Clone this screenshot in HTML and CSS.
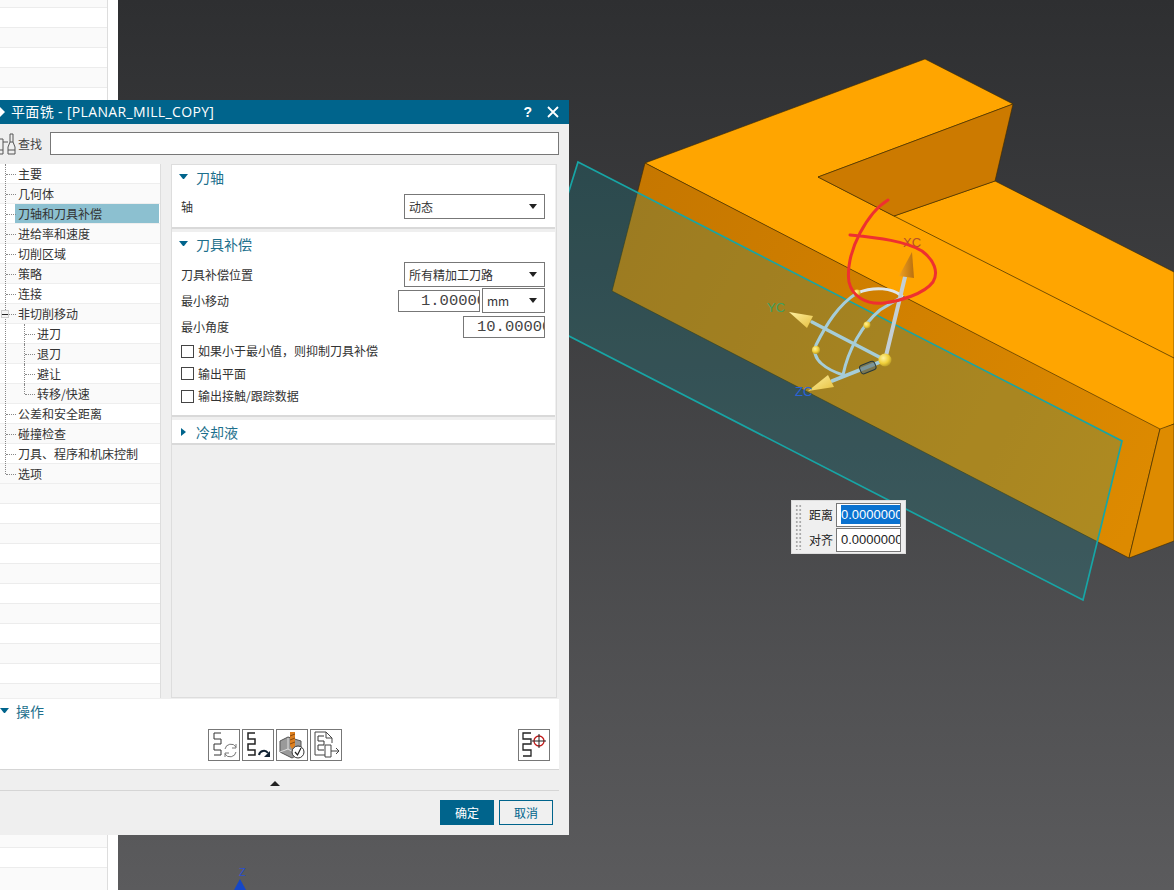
FILE: index.html
```html
<!DOCTYPE html>
<html lang="zh-CN">
<head>
<meta charset="utf-8">
<title>平面铣</title>
<link rel="stylesheet" href="styles.css">
</head>
<body>
<div class="app">
  <aside class="side"><div class="side-rows"></div></aside>
  <main class="viewport">
    <svg class="scene" viewBox="118 0 1056 890" xmlns="http://www.w3.org/2000/svg">
      <defs>
        <linearGradient id="front" gradientUnits="userSpaceOnUse" x1="620" y1="220" x2="1150" y2="490"><stop offset="0" stop-color="#c67700"/><stop offset="1" stop-color="#dd8a00"/></linearGradient>
        <radialGradient id="ball" cx=".38" cy=".35" r=".75"><stop offset="0" stop-color="#fff3a0"/><stop offset=".55" stop-color="#f0cf3a"/><stop offset="1" stop-color="#a88a20"/></radialGradient>
        <linearGradient id="coneY" x1="0" y1="0" x2="1" y2="1"><stop offset="0" stop-color="#fff0a0"/><stop offset="1" stop-color="#e6c040"/></linearGradient>
        <linearGradient id="coneX" x1="0" y1="0" x2="1" y2="0"><stop offset="0" stop-color="#f0a020"/><stop offset="1" stop-color="#b87010"/></linearGradient>
      </defs>
      <polygon points="645,163 925,59 1013,104 818,177 894,216 995,181 1174,272 1174,424 1160,430" fill="#ffa500" stroke="#3a2a00" stroke-width=".6"/>
      <polygon points="818,177 1013,104 995,181 894,216" fill="#cc7a00" stroke="#3a2a00" stroke-width=".6"/>
      <polygon points="645,163 612,291 1129,558 1160,429" fill="url(#front)" stroke="#3a2a00" stroke-width=".6"/>
      <polygon points="1160,429 1129,558 1174,541 1174,424" fill="#de8b00" stroke="#3a2a00" stroke-width=".6"/>
      <line x1="894" y1="216" x2="1174" y2="358" stroke="#3a2a00" stroke-width=".7"/>
      <polygon points="578,162 1122,441 1083,600 530,316" fill="#0a8f95" fill-opacity=".22" stroke="#17a5a5" stroke-width="1.7"/>
      <g fill="none" stroke-linecap="round">
        <path d="M857 293C875 286 892 288 902 296" stroke="#dfe6ea" stroke-width="3"/>
        <path d="M857 293C838 305 826 325 816 345C810 360 828 370 843 375" stroke="#a6cdd8" stroke-width="3"/>
        <path d="M843 375C848 350 862 325 880 310L900 298" stroke="#a6cdd8" stroke-width="3"/>
        <path d="M812 322L885 360" stroke="#a6cdd8" stroke-width="3.5"/>
        <path d="M832 381L885 360" stroke="#a6cdd8" stroke-width="3.5"/>
        <path d="M885 360L905 277" stroke="#c3cfd6" stroke-width="4"/>
      </g>
      <polygon points="912,252 899,276 914,278" fill="url(#coneX)"/>
      <polygon points="789,312 813,316 807,328" fill="url(#coneY)"/>
      <polygon points="808,391 828,375 834,387" fill="url(#coneY)"/>
      <rect x="860" y="363" width="16" height="9" rx="3" transform="rotate(-22 868 368)" fill="#5f7072" fill-opacity=".6" stroke="#27383a"/>
      <circle cx="885" cy="360" r="6.5" fill="url(#ball)"/>
      <circle cx="857" cy="293" r="3.5" fill="url(#ball)"/>
      <circle cx="867" cy="325" r="3.5" fill="url(#ball)"/>
      <circle cx="816" cy="350" r="4" fill="url(#ball)"/>
      <text x="903" y="247" class="axis" fill="#b5502a">XC</text>
      <text x="767" y="312" class="axis" fill="#3fa060">YC</text>
      <text x="795" y="396" class="axis" fill="#2a62d8">ZC</text>
      <path d="M888 200C878 206 868 218 860 233C850 252 847 270 849 282C852 296 866 305 884 303C900 301 924 294 933 282C939 272 934 260 922 251C905 241 880 238 850 235" fill="none" stroke="#ee3030" stroke-width="3" stroke-linecap="round"/>
      <text x="239" y="876" class="axis-z" fill="#2a4fd0">Z</text>
      <polygon points="240,879 234,890 246,890" fill="#1547c8"/>
    </svg>
  </main>
</div>

<section class="float-panel">
  <div class="grip"></div>
  <div class="float-fields">
    <div class="float-row"><span class="float-label">距离</span><div class="float-input"><span class="selected">0.0000000</span></div></div>
    <div class="float-row"><span class="float-label">对齐</span><div class="float-input">0.0000000</div></div>
  </div>
</section>

<section class="dialog">
  <header class="titlebar">
    <svg class="title-icon" width="6" height="12" viewBox="0 0 6 12"><path d="M0 1L5 6L0 11Z" fill="#fff"/></svg>
    <span class="title-text">平面铣 - [PLANAR_MILL_COPY]</span>
    <span class="title-btn help">?</span>
    <svg class="title-close" width="12" height="12" viewBox="0 0 12 12"><path d="M1 1L11 11M11 1L1 11" stroke="#fff" stroke-width="1.8"/></svg>
  </header>

  <div class="search">
    <svg class="binoculars" width="16" height="22" viewBox="0 0 16 22" fill="none" stroke="#555"><path d="M-2 6H3V21H-2M3 17H-2M3 9H8M10 1H13V9H10ZM10 9L8 14V21H15V14L13 9M8 17H15"/></svg>
    <span class="search-label">查找</span>
    <div class="search-input"></div>
  </div>

  <div class="main">
    <nav class="tree">
      <div class="tree-list">
        <div class="row">主要</div>
        <div class="row alt">几何体</div>
        <div class="row active"><span class="row-pick">刀轴和刀具补偿</span></div>
        <div class="row alt">进给率和速度</div>
        <div class="row">切削区域</div>
        <div class="row alt">策略</div>
        <div class="row">连接</div>
        <div class="row alt"><span class="minus"></span>非切削移动</div>
        <div class="row sub">进刀</div>
        <div class="row sub alt">退刀</div>
        <div class="row sub">避让</div>
        <div class="row sub alt last">转移/快速</div>
        <div class="row">公差和安全距离</div>
        <div class="row alt">碰撞检查</div>
        <div class="row">刀具、程序和机床控制</div>
        <div class="row alt">选项</div>
      </div>
      <div class="tree-empty"></div>
    </nav>

    <div class="panel">
      <section class="card card-axis">
        <h3 class="group"><span class="tri-down"></span>刀轴</h3>
        <div class="field field-axis"><span class="label">轴</span>
          <div class="select w141"><span>动态</span><i class="caret"></i></div></div>
      </section>
      <section class="card card-comp">
        <h3 class="group"><span class="tri-down"></span>刀具补偿</h3>
        <div class="field f1"><span class="label">刀具补偿位置</span>
          <div class="select w141"><span>所有精加工刀路</span><i class="caret"></i></div></div>
        <div class="field f2"><span class="label">最小移动</span>
          <div class="combo"><div class="num num-a">1.00000</div><div class="select w63"><span>mm</span><i class="caret"></i></div></div></div>
        <div class="field f3"><span class="label">最小角度</span><div class="num num-b">10.00000</div></div>
        <label class="check c1"><span class="box"></span>如果小于最小值，则抑制刀具补偿</label>
        <label class="check"><span class="box"></span>输出平面</label>
        <label class="check"><span class="box"></span>输出接触/跟踪数据</label>
      </section>
      <section class="card card-cool">
        <h3 class="group"><span class="tri-right"></span>冷却液</h3>
      </section>
    </div>
  </div>

  <section class="ops">
    <h3 class="group ops-head"><span class="tri-down"></span>操作</h3>
    <div class="ops-bar">
      <div class="tools">
        <button class="tool"><svg width="30" height="30" viewBox="0 0 30 30" fill="none"><path d="M12 3H5V9H12V14H5V20H12V25H5" stroke="#333"/><path d="M16 19A6 6 0 0 1 27 17M27 22A6 6 0 0 1 16 24M27 14V18H23M16 27V23H20" stroke="#777"/></svg></button>
        <button class="tool"><svg width="30" height="30" viewBox="0 0 30 30" fill="none"><path d="M12 3H5V9H12V14H5V20H12V25H5" stroke="#222" stroke-width="1.5"/><path d="M16 25A5 5 0 0 1 25 23" stroke="#123" stroke-width="2"/><path d="M27 21V27H21Z" fill="#123"/></svg></button>
        <button class="tool"><svg width="30" height="30" viewBox="0 0 30 30"><path d="M3 11L11 7L24 11V23L15 28L3 22Z" fill="#9a9a9a" stroke="#555"/><path d="M11 8L11 19L3 22M11 19L20 24" stroke="#e0e0e0" fill="none"/><path d="M13 2H18V16L15 19L13 16Z" fill="#dd8020"/><path d="M13 6L18 4M13 10L18 8M13 14L18 12" stroke="#8a4a10"/><circle cx="21" cy="22" r="6" fill="#fff" stroke="#333"/><path d="M18 22L20.5 25L24 18" fill="none" stroke="#222" stroke-width="1.2"/></svg></button>
        <button class="tool"><svg width="30" height="30" viewBox="0 0 30 30" fill="none"><path d="M4 2H15L21 8V13M4 2V25H14M15 2V8H21" stroke="#444"/><path d="M13 6H7V11H13V15H7V20H13" stroke="#333"/><path d="M14 15H20V27H14ZM20 21H28M25 18L28 21L25 24" stroke="#444"/></svg></button>
      </div>
      <button class="tool tool-end"><svg width="30" height="30" viewBox="0 0 30 30" fill="none"><path d="M12 3H4V9H12V14H4V20H12V26H4" stroke="#222" stroke-width="1.3"/><circle cx="20" cy="11" r="5" stroke="#c01818" stroke-width="1.3"/><path d="M13 11H27M20 4V18" stroke="#222"/></svg></button>
    </div>
  </section>

  <div class="collapse"><i class="tri-up"></i></div>

  <footer class="actions">
    <button class="btn primary">确定</button>
    <button class="btn">取消</button>
  </footer>
</section>
</body>
</html>
```
FILE: styles.css
```css
* { box-sizing: border-box; }
html, body { margin: 0; height: 890px; overflow: hidden; }
body {
  position: relative;
  width: 1174px;
  font: 12px/20px "Noto Sans CJK SC", "Liberation Sans", sans-serif;
  color: #333;
  background: #fff;
}
.app { display: flex; height: 890px; }
.side { width: 118px; background: #fff; flex: none; }
.side-rows {
  width: 108px; height: 890px; border-right: 1px solid #ddd;
  background: repeating-linear-gradient(#fafafa 0 19px, #ececec 19px 20px, #fff 20px 39px, #ececec 39px 40px) 0 -12px;
}
.viewport { flex: 1; background: linear-gradient(#2e2f31, #5b5b5d); }
.scene { display: block; width: 1056px; height: 890px; }
.axis { font: 13px "Liberation Sans", sans-serif; }
.axis-z { font: 11px "Liberation Sans", sans-serif; }

.float-panel {
  position: absolute; left: 791px; top: 500px; width: 115px; height: 54px;
  display: flex; background: #efefef; border: 1px solid #ddd; padding: 2px 4px 2px 3px;
}
.grip {
  width: 7px; margin: 1px 0;
  background: radial-gradient(circle, #aaa 1px, transparent 1.2px) 0 0 / 3.5px 4px;
}
.float-fields { flex: 1; display: flex; flex-direction: column; gap: 1px; }
.float-row { display: flex; align-items: center; justify-content: flex-end; gap: 3px; height: 24px; }
.float-label { color: #222; }
.float-input {
  width: 65px; height: 24px; border: 1px solid #777; background: #fff; padding: 1px 0 0 4px;
  overflow: hidden; white-space: nowrap; font: 13px/20px "Liberation Sans", sans-serif; color: #222;
}
.selected { background: #0a72d0; color: #fff; display: inline-block; height: 19px; line-height: 19px; }

.dialog {
  position: absolute; left: 0; top: 100px; width: 569px; height: 735px;
  background: #efefef; display: flex; flex-direction: column;
}
.titlebar {
  height: 24px; background: #00648c; color: #fff; display: flex; align-items: center; flex: none;
}
.title-icon { margin: 0 5px 0 0; }
.title-text { font-size: 14px; letter-spacing: .35px; flex: 1; font-family: "Open Sans", "Noto Sans CJK SC", sans-serif; }
.title-btn { font: bold 14px "Liberation Sans", sans-serif; margin-right: 15px; }
.title-close { margin-right: 10px; }

.search { height: 40px; display: flex; align-items: center; flex: none; padding: 0 10px 0 0; }
.binoculars { flex: none; margin: 0 2px 0 0; }
.search-label { width: 32px; color: #444; font-size: 12px; }
.search-input { flex: 1; height: 23px; background: #fff; border: 1px solid #777; margin-top: -2px; }

.main { display: flex; gap: 10px; flex: none; height: 534px; }
.tree { width: 161px; background: #fff; border-right: 1px solid #ddd; display: flex; flex-direction: column; overflow: hidden; }
.tree-list { position: relative; flex: none; }
.tree-list::before {
  content: ""; position: absolute; z-index: 1; left: 5px; top: 0; bottom: 10px; border-left: 1px dotted #888;
}
.tree-empty {
  flex: 1;
  background: repeating-linear-gradient(#fafafa 0 19px, #ececec 19px 20px, #fff 20px 39px, #ececec 39px 40px);
}
.row {
  position: relative; height: 20px; padding-left: 18px; border-bottom: 1px solid #eee;
  line-height: 19px; background: #fff; color: #333; white-space: nowrap;
}
.row.alt { background: #fafafa; }
.row::before {
  content: ""; position: absolute; left: 6px; width: 10px; top: 10px; border-top: 1px dotted #888;
}
.row.sub { padding-left: 37px; }
.row.sub::before { left: 25px; }
.row.sub::after {
  content: ""; position: absolute; left: 24px; top: 0; bottom: -1px; border-left: 1px dotted #888;
}
.row.sub.last::after { bottom: 9px; }
.row.active { padding-left: 15px; padding-right: 1px; }
.row-pick { display: block; height: 19px; background: #8cc0d0; padding-left: 3px; }
.minus {
  position: absolute; z-index: 2; left: 1px; top: 6px; width: 8px; height: 8px;
  background: linear-gradient(#222, #222) center / 6px 1px no-repeat #f4f4f4; border: 1px solid #ccc;
}

.panel {
  width: 386px; background: #efefef; border: 1px solid #ddd; display: flex; flex-direction: column; gap: 3px; overflow: hidden;
}
.card { width: 383px; background: #fff; border-bottom: 2px solid #d9d9d9; }
.card-axis { height: 64px; }
.card-comp { height: 185px; }
.card-cool { height: 25px; }
.group { margin: 0; font-weight: 400; font-size: 14px; line-height: 26px; height: 26px; color: #1d6f8c; display: flex; align-items: center; padding: 0 0 3px 7px; }
.tri-down { height: 0; border: 4.5px solid transparent; border-top: 5px solid #00648c; border-bottom: 0; margin-right: 8px; width: 9px; flex: none; }
.tri-right { width: 0; height: 0; border: 4.5px solid transparent; border-left: 5px solid #00648c; border-right: 0; margin-right: 10px; margin-left: 2px; flex: none; }
.field { display: flex; align-items: center; justify-content: space-between; padding: 0 10px 0 9px; }
.label { color: #333; }
.field-axis { height: 25px; margin-top: 3px; }
.f1 { height: 25px; margin-top: 4px; }
.f2 { height: 25px; margin-top: 1px; }
.f3 { height: 22px; margin-top: 3px; }
.select {
  height: 25px; border: 1px solid #777; background: #fff; display: flex; align-items: center;
  justify-content: space-between; padding: 0 7px 0 4px; color: #333;
}
.w141 { width: 141px; }
.w63 { width: 63px; }
.caret { width: 0; height: 0; border: 4px solid transparent; border-top: 5px solid #222; border-bottom: 0; }
.combo { display: flex; align-items: center; gap: 2px; }
.num {
  height: 22px; border: 1px solid #777; background: #fff; overflow: hidden; white-space: nowrap;
  font: 15.5px/21px "Liberation Mono", monospace; color: #444;
}
.num-a { width: 82px; padding-left: 22px; }
.num-b { width: 82px; padding-left: 13px; }
.check { display: flex; align-items: center; gap: 4px; height: 22.5px; padding-left: 9px; color: #333; }
.c1 { margin-top: 2px; }
.box { width: 13px; height: 13px; border: 1px solid #444; background: #fff; flex: none; }

.ops {
  margin-top: 1px; width: 559px; height: 71px; background: #fff; border-bottom: 1px solid #d5d5d5; flex: none; position: relative;
}
.ops-head { padding-left: 0; height: 26px; }
.ops-head .tri-down { margin-right: 7px; }
.ops-bar { display: flex; justify-content: space-between; padding: 4px 9px 0 208px; }
.tools { display: flex; gap: 2px; }
.tool { width: 32px; height: 32px; padding: 0; border: 1px solid #777; background: #fff; display: flex; align-items: center; justify-content: center; }
.collapse { height: 21px; border-bottom: 1px solid #d5d5d5; flex: none; display: flex; justify-content: center; align-items: center; width: 559px; padding-right: 9px; }
.tri-up { width: 0; height: 0; border: 5px solid transparent; border-bottom: 5px solid #222; border-top: 0; margin-top: 6px; }
.actions { display: flex; justify-content: flex-end; gap: 5px; padding: 9px 16px 0 0; }
.btn {
  width: 54px; height: 25px; padding: 0; border: 1px solid #00648c; background: #f0f0f0; color: #00648c;
  font: 12px "Noto Sans CJK SC", sans-serif;
}
.btn.primary { background: #00648c; color: #fff; }
```
